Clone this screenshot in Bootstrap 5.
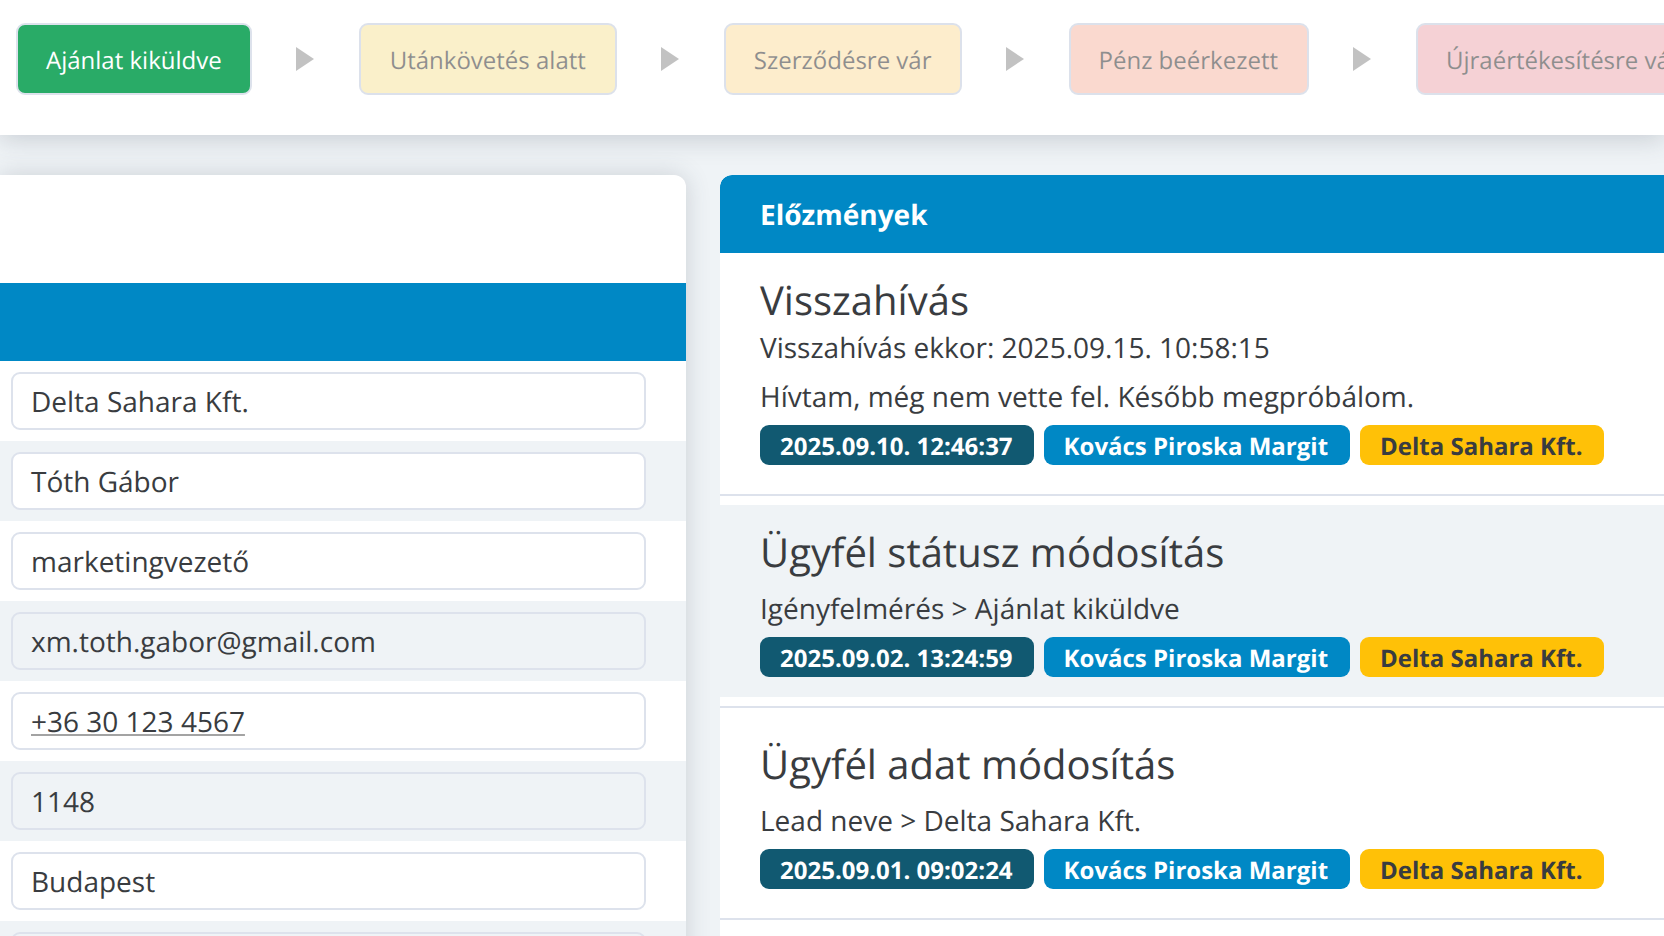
<!DOCTYPE html>
<html lang="en">
<head>
    <meta charset="UTF-8">
    <title>Ügyfél</title>
    <link rel="stylesheet" href="https://cdn.jsdelivr.net/npm/bootstrap@5.3.0/dist/css/bootstrap.min.css">
    <style>
        body {
            background-color: #eff3f6;
            color: #393c40;
            font-family: "Open Sans", "Noto Sans", sans-serif;
            text-rendering: geometricPrecision;
            height: 936px;
            overflow: hidden;
        }

        .top-bar {
            height: 135px;
            padding: 23px 0 0 16px;
            background: #fff;
            box-shadow: 0 4px 24px rgba(60, 70, 85, .22);
            position: relative;
            overflow: hidden;
        }

        .step-box {
            flex: none;
            height: 72px;
            padding-top: 4px;
            border: 2px solid #bbc5d9;
            border-radius: 9px;
            font-size: 24px;
            color: #1f1f1f;
            opacity: .5;
        }

        .step-done {
            background: #29ab67;
            color: #fff;
            padding-left: 28px;
            padding-right: 28px;
            border-color: #dde2ec;
            opacity: 1;
        }

        .step-yellow { background: #f7e397; padding-left: 29px; padding-right: 29px; }
        .step-orange { background: #fddd9b; padding-left: 28px; padding-right: 28px; }
        .step-salmon { background: #f7b5a1; padding-left: 28px; padding-right: 29px; }
        .step-pink { background: #eda5ad; padding-left: 28px; padding-right: 28px; }

        .step-arrow {
            flex: none;
            width: 18px;
            margin: 24px 45px 0 44px;
        }

        .main-area {
            padding-top: 40px;
            gap: 34px;
        }

        .left-panel {
            flex: none;
            width: 686px;
            height: 900px;
            background: #fff;
            border-radius: 0 12px 0 0;
            box-shadow: 0 0 24px rgba(60, 70, 85, .2);
        }

        .left-top { height: 108px; }

        .blue-head {
            height: 78px;
            background: #0088c5;
            color: #fff;
            font-size: 28px;
            font-weight: 700;
            padding: 1px 0 0 40px;
        }

        .field-row {
            height: 80px;
            padding: 11px 40px 11px 11px;
        }

        .field-row:nth-child(even) { background: #eff3f6; }

        .field-box {
            height: 58px;
            padding: 1px 18px 0;
            border: 2px solid #dde2ec;
            border-radius: 9px;
            font-size: 28px;
            background: #fff;
        }

        .field-plain { background: transparent; }

        .phone-link {
            color: #393c40;
            text-decoration-color: #a3a3a3;
        }

        .right-panel {
            flex: 1;
            height: 900px;
            background: #fff;
            border-radius: 12px 0 0 0;
            overflow: hidden;
        }

        .blue-head-right { border-radius: 12px 0 0 0; }

        .history-item {
            height: 192px;
            padding: 23px 40px 0;
        }

        .history-tall { height: 231px; }
        .history-shade { background: #eff3f6; }

        .history-item h3 {
            font-size: 40px;
            font-weight: 400;
            color: #393c40;
            margin: 0;
        }

        .history-item p {
            font-size: 28px;
            margin: 12px 0 0;
        }

        .history-item h3 + p.note-line { margin-top: 3px; }
        .history-item p.note-line + p { margin-top: 7px; }

        .history-line {
            margin: 9px 0 9px;
            border: 0;
            border-top: 2px solid #dde2ec;
            opacity: 1;
        }

        .history-tall + .history-line { margin-top: 10px; }

        .tag-row { gap: 10px; margin-top: 7px; }

        .tag-pill {
            height: 40px;
            padding: 4px 21px 0 20px;
            border-radius: 9px;
            font-size: 24px;
            font-weight: 700;
        }

        .tag-date { background: #115971; color: #fff; }
        .tag-user { background: #0088c5; color: #fff; padding-right: 22px; }
        .tag-firm { background: #ffc107; color: #393c40; }
    </style>
</head>

<body>
    <!-- Status steps -->
    <div class="top-bar d-flex align-items-start">
        <div class="step-box step-done d-flex align-items-center">Ajánlat kiküldve</div>
        <svg class="step-arrow" viewBox="0 0 18 24" height="24"><path d="M0 0 18 12 0 24Z" fill="#c2c2c2"/></svg>
        <div class="step-box step-yellow d-flex align-items-center">Utánkövetés alatt</div>
        <svg class="step-arrow" viewBox="0 0 18 24" height="24"><path d="M0 0 18 12 0 24Z" fill="#c2c2c2"/></svg>
        <div class="step-box step-orange d-flex align-items-center">Szerződésre vár</div>
        <svg class="step-arrow" viewBox="0 0 18 24" height="24"><path d="M0 0 18 12 0 24Z" fill="#c2c2c2"/></svg>
        <div class="step-box step-salmon d-flex align-items-center">Pénz beérkezett</div>
        <svg class="step-arrow" viewBox="0 0 18 24" height="24"><path d="M0 0 18 12 0 24Z" fill="#c2c2c2"/></svg>
        <div class="step-box step-pink d-flex align-items-center">Újraértékesítésre vár</div>
    </div>

    <div class="main-area d-flex">
        <!-- Client data -->
        <div class="left-panel">
            <div class="left-top"></div>
            <div class="blue-head"></div>
            <div>
                <div class="field-row"><div class="field-box d-flex align-items-center">Delta Sahara Kft.</div></div>
                <div class="field-row"><div class="field-box d-flex align-items-center">Tóth Gábor</div></div>
                <div class="field-row"><div class="field-box d-flex align-items-center">marketingvezető</div></div>
                <div class="field-row"><div class="field-box field-plain d-flex align-items-center">xm.toth.gabor@gmail.com</div></div>
                <div class="field-row"><div class="field-box d-flex align-items-center"><a class="phone-link" href="#">+36 30 123 4567</a></div></div>
                <div class="field-row"><div class="field-box field-plain d-flex align-items-center">1148</div></div>
                <div class="field-row"><div class="field-box d-flex align-items-center">Budapest</div></div>
                <div class="field-row"><div class="field-box field-plain d-flex align-items-center"></div></div>
            </div>
        </div>

        <!-- History -->
        <div class="right-panel">
            <div class="blue-head blue-head-right d-flex align-items-center">Előzmények</div>
            <div class="history-item history-tall">
                <h3>Visszahívás</h3>
                <p class="note-line">Visszahívás ekkor: 2025.09.15. 10:58:15</p>
                <p>Hívtam, még nem vette fel. Később megpróbálom.</p>
                <div class="tag-row d-flex">
                    <span class="tag-pill tag-date d-flex align-items-center">2025.09.10. 12:46:37</span>
                    <span class="tag-pill tag-user d-flex align-items-center">Kovács Piroska Margit</span>
                    <span class="tag-pill tag-firm d-flex align-items-center">Delta Sahara Kft.</span>
                </div>
            </div>
            <hr class="history-line">
            <div class="history-item history-shade">
                <h3>Ügyfél státusz módosítás</h3>
                <p>Igényfelmérés &gt; Ajánlat kiküldve</p>
                <div class="tag-row d-flex">
                    <span class="tag-pill tag-date d-flex align-items-center">2025.09.02. 13:24:59</span>
                    <span class="tag-pill tag-user d-flex align-items-center">Kovács Piroska Margit</span>
                    <span class="tag-pill tag-firm d-flex align-items-center">Delta Sahara Kft.</span>
                </div>
            </div>
            <hr class="history-line">
            <div class="history-item">
                <h3>Ügyfél adat módosítás</h3>
                <p>Lead neve &gt; Delta Sahara Kft.</p>
                <div class="tag-row d-flex">
                    <span class="tag-pill tag-date d-flex align-items-center">2025.09.01. 09:02:24</span>
                    <span class="tag-pill tag-user d-flex align-items-center">Kovács Piroska Margit</span>
                    <span class="tag-pill tag-firm d-flex align-items-center">Delta Sahara Kft.</span>
                </div>
            </div>
            <hr class="history-line">
        </div>
    </div>
    <script src="https://cdn.jsdelivr.net/npm/bootstrap@5.3.0/dist/js/bootstrap.bundle.min.js"></script>
</body>

</html>
